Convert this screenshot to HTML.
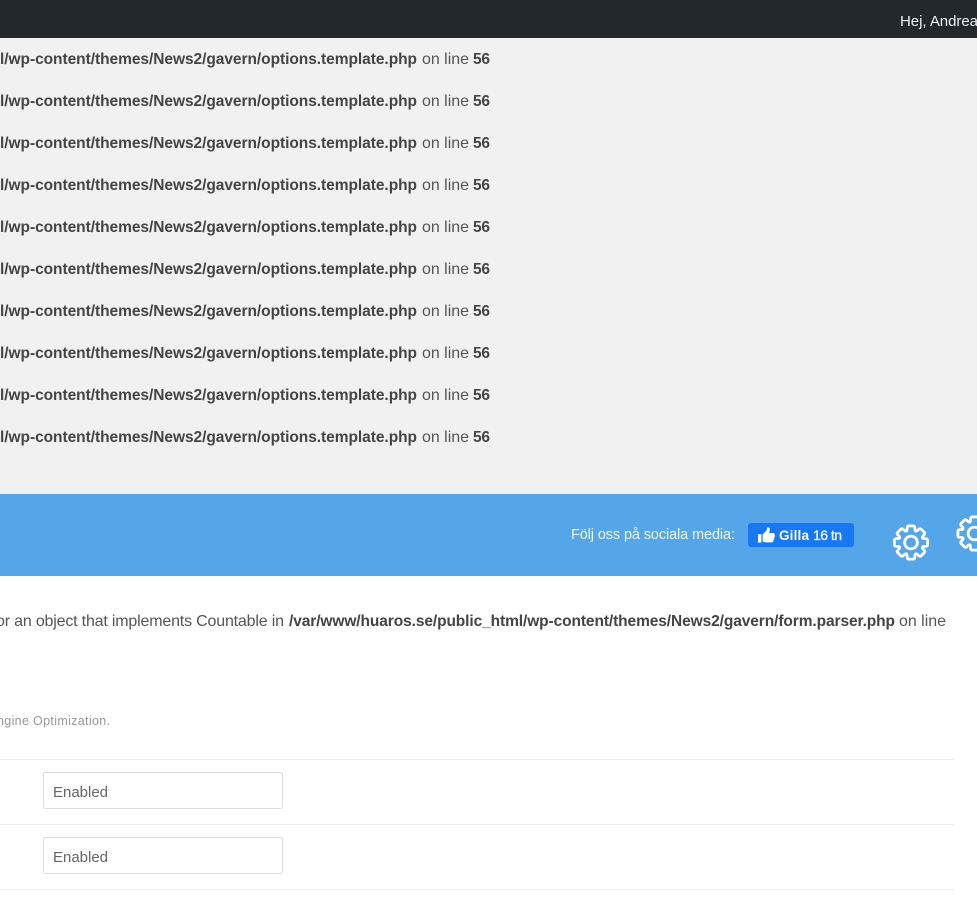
<!DOCTYPE html>
<html lang="sv">
<head>
<meta charset="utf-8">
<title>Inställningar</title>
<style>
html,body{margin:0;padding:0;width:977px;height:898px;overflow:hidden;background:#fff}
svg{display:block;position:absolute;left:0;top:0}
text{font-family:"Liberation Sans",Arial,sans-serif;white-space:pre}
.r text{font-size:16px;fill:#444}
.r .b{font-size:15.5px;font-weight:700;fill:#444}
.r .n{fill:#555}
</style>
</head>
<body>
<svg width="977" height="898" viewBox="0 0 977 898" xmlns="http://www.w3.org/2000/svg">
<defs>
<path id="t" d="M-4.7-11.4C-3.6-12-3.9-13.2-3.9-14.4Q-3.8-16.6-2.2-16.6L2.2-16.6Q3.8-16.6 3.9-14.4C3.9-13.2 3.6-12 4.7-11.4"/>
<g id="gear" fill="none" stroke="#fff" stroke-width="2.8" stroke-linecap="round" stroke-linejoin="round">
<use href="#t"/><use href="#t" transform="rotate(45)"/><use href="#t" transform="rotate(90)"/><use href="#t" transform="rotate(135)"/><use href="#t" transform="rotate(180)"/><use href="#t" transform="rotate(225)"/><use href="#t" transform="rotate(270)"/><use href="#t" transform="rotate(315)"/>
<circle r="6.4"/>
</g>
</defs>

<rect width="977" height="38" fill="#23282d"/>
<text x="900" y="26" font-size="15" fill="#f1f1f1" textLength="78">Hej, Andrea</text>

<rect y="38" width="977" height="456" fill="#f1f1f1"/>
<g class="r">
<text class="b" x="0" y="64" textLength="417">l/wp-content/themes/News2/gavern/options.template.php</text><text class="n" x="422" y="64" textLength="47">on line</text><text class="b" x="473" y="64" textLength="17">56</text>
<text class="b" x="0" y="106" textLength="417">l/wp-content/themes/News2/gavern/options.template.php</text><text class="n" x="422" y="106" textLength="47">on line</text><text class="b" x="473" y="106" textLength="17">56</text>
<text class="b" x="0" y="148" textLength="417">l/wp-content/themes/News2/gavern/options.template.php</text><text class="n" x="422" y="148" textLength="47">on line</text><text class="b" x="473" y="148" textLength="17">56</text>
<text class="b" x="0" y="190" textLength="417">l/wp-content/themes/News2/gavern/options.template.php</text><text class="n" x="422" y="190" textLength="47">on line</text><text class="b" x="473" y="190" textLength="17">56</text>
<text class="b" x="0" y="232" textLength="417">l/wp-content/themes/News2/gavern/options.template.php</text><text class="n" x="422" y="232" textLength="47">on line</text><text class="b" x="473" y="232" textLength="17">56</text>
<text class="b" x="0" y="274" textLength="417">l/wp-content/themes/News2/gavern/options.template.php</text><text class="n" x="422" y="274" textLength="47">on line</text><text class="b" x="473" y="274" textLength="17">56</text>
<text class="b" x="0" y="316" textLength="417">l/wp-content/themes/News2/gavern/options.template.php</text><text class="n" x="422" y="316" textLength="47">on line</text><text class="b" x="473" y="316" textLength="17">56</text>
<text class="b" x="0" y="358" textLength="417">l/wp-content/themes/News2/gavern/options.template.php</text><text class="n" x="422" y="358" textLength="47">on line</text><text class="b" x="473" y="358" textLength="17">56</text>
<text class="b" x="0" y="400" textLength="417">l/wp-content/themes/News2/gavern/options.template.php</text><text class="n" x="422" y="400" textLength="47">on line</text><text class="b" x="473" y="400" textLength="17">56</text>
<text class="b" x="0" y="442" textLength="417">l/wp-content/themes/News2/gavern/options.template.php</text><text class="n" x="422" y="442" textLength="47">on line</text><text class="b" x="473" y="442" textLength="17">56</text>
</g>

<rect y="494" width="977" height="82" fill="#54a6e8"/>
<text x="571" y="539" font-size="14.5" fill="#eef6fd" textLength="164">Följ oss på sociala media:</text>
<rect x="748" y="523" width="106" height="24" rx="3" fill="#1877f2"/>
<path d="M758 534.2h3.4V542.6H758zM762.6 534.4 766.4 530.6C767 529.6 767 528.4 767.2 527.4 768.6 526.8 770 528 769.8 530 769.7 531 769.3 532 769 533H773.2C774.6 533 775.2 534.4 774.6 535.4 775 536.2 774.9 537.2 774.2 537.8 774.4 538.7 774.2 539.5 773.5 540 773.6 541.4 772.8 542.4 771.4 542.4H766.2C764.8 542.4 763.6 542 762.6 541.2Z" fill="#fff"/>
<text x="779" y="540" font-size="13.5" font-weight="700" fill="#fff" textLength="30">Gilla</text>
<text x="813" y="540" font-size="14" fill="#fff" stroke="#fff" stroke-width="0.25" textLength="29">16 tn</text>
<use href="#gear" transform="translate(911 542.5)"/>
<use href="#gear" transform="translate(974.5 533.5)"/>

<g class="r">
<text class="n" x="-4" y="626" textLength="288">or an object that implements Countable in</text>
<text class="b" x="289" y="626" textLength="606">/var/www/huaros.se/public_html/wp-content/themes/News2/gavern/form.parser.php</text>
<text class="n" x="899" y="626" textLength="47">on line</text>
</g>

<text x="-3" y="725" font-size="12.5" fill="#999" textLength="113">ngine Optimization.</text>

<rect y="759" width="955" height="1" fill="#eee"/>
<rect x="43.5" y="772.5" width="239" height="36" rx="2" fill="#fff" stroke="#ddd"/>
<text x="53" y="797" font-size="15" fill="#666" textLength="55">Enabled</text>
<rect y="824" width="955" height="1" fill="#eee"/>
<rect x="43.5" y="837.5" width="239" height="36" rx="2" fill="#fff" stroke="#ddd"/>
<text x="53" y="862" font-size="15" fill="#666" textLength="55">Enabled</text>
<rect y="889" width="955" height="1" fill="#eee"/>
</svg>
</body>
</html>
